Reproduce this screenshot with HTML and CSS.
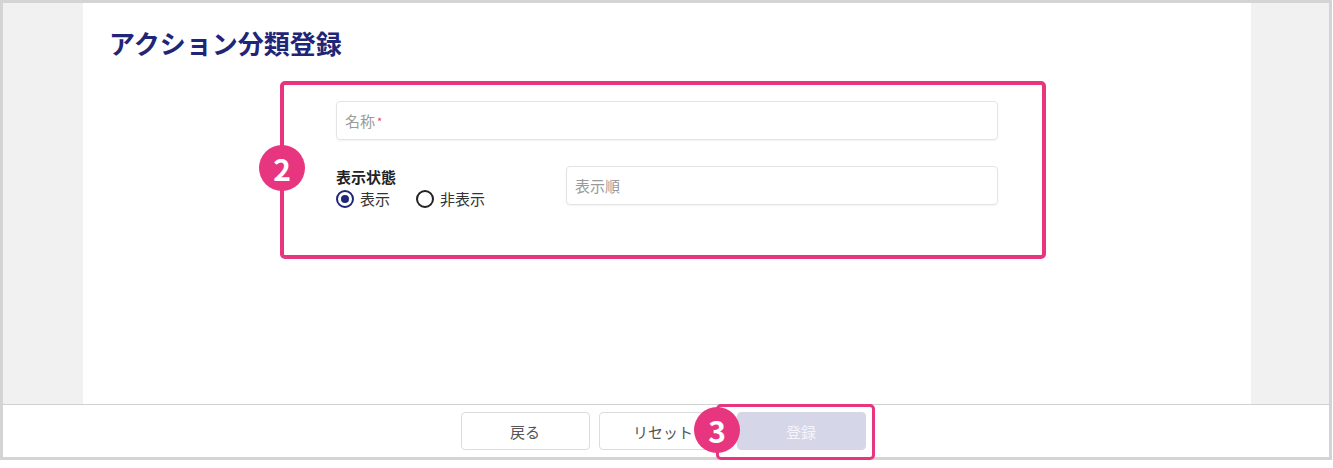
FILE: index.html
```html
<!DOCTYPE html>
<html lang="ja">
<head>
    <meta charset="UTF-8">
    <title>アクション分類登録</title>
    <link rel="stylesheet" href="styles.css">
</head>
<body>

<div class="frame">
    <div class="main">
        <div class="side"></div>
        <div class="content">
            <h1>アクション分類登録</h1>

            <form class="form">
                <div class="field">
                    <div class="placeholder">名称<span class="req">*</span></div>
                </div>

                <div class="row">
                    <div class="status">
                        <div class="label">表示状態</div>
                        <div class="radios">
                            <label class="radio"><span class="dot checked"></span>表示</label>
                            <label class="radio"><span class="dot"></span>非表示</label>
                        </div>
                    </div>
                    <div class="field grow">
                        <div class="placeholder">表示順</div>
                    </div>
                </div>
            </form>
        </div>
        <div class="side right"></div>
    </div>

    <footer class="footer">
        <button type="button" class="btn">戻る</button>
        <button type="button" class="btn">リセット</button>
        <button type="button" class="btn primary" disabled>登録</button>
    </footer>
</div>

<!-- annotations -->
<div class="mark box-2"></div>
<div class="badge badge-2">2</div>
<div class="mark box-3"></div>
<div class="badge badge-3">3</div>

</body>
</html>
```

FILE: styles.css
```css
body {
    margin: 0;
    font-family: "Noto Sans CJK JP", "Noto Sans", sans-serif;
    color: #333;
    background: #fff;
    position: relative;
}

.frame {
    width: 1326px;
    border: 3px solid #d4d4d4;
    background: #fff;
}

.main {
    display: flex;
    height: 401px;
}

.side {
    width: 80px;
    background: #f1f1f1;
}

.side.right {
    width: 78px;
}

.content {
    flex: 1;
    padding: 23px 26px;
}

h1 {
    margin: 0;
    font-size: 26px;
    line-height: 34px;
    font-weight: 700;
    color: #1f2678;
}

.form {
    width: 662px;
    margin: 41px auto 0;
}

.field {
    height: 37px;
    border: 1px solid #e4e4e4;
    border-radius: 4px;
    box-shadow: 0 1px 2px rgba(0, 0, 0, 0.05);
    display: flex;
    align-items: center;
    padding: 0 8px;
}

.placeholder {
    font-size: 15px;
    color: #9a9a9a;
}

.req {
    color: #e0445e;
    font-size: 11px;
    margin-left: 2px;
    vertical-align: 1px;
}

.row {
    display: flex;
    margin-top: 26px;
}

.status {
    width: 230px;
}

.grow {
    flex: 1;
}

.label {
    font-size: 15px;
    font-weight: 700;
    line-height: 20px;
    margin-top: 1px;
    color: #222;
}

.radios {
    display: flex;
    gap: 26px;
    line-height: 23px;
}

.radio {
    display: flex;
    align-items: center;
    font-size: 15px;
    color: #333;
}

.dot {
    box-sizing: border-box;
    width: 18px;
    height: 18px;
    border: 2px solid #222;
    border-radius: 50%;
    margin-right: 6px;
    position: relative;
}

.dot.checked {
    border-color: #1f2678;
}

.dot.checked::after {
    content: "";
    position: absolute;
    left: 3px;
    top: 3px;
    width: 8px;
    height: 8px;
    border-radius: 50%;
    background: #1f2678;
}

.footer {
    border-top: 1px solid #d0d0d0;
    height: 52px;
    display: flex;
    justify-content: center;
    align-items: center;
    gap: 9px;
    padding-right: 6px;
}

.btn {
    width: 129px;
    height: 38px;
    background: #fff;
    border: 1px solid #dcdcdc;
    border-radius: 4px;
    font-family: inherit;
    font-size: 15px;
    color: #555;
}

.btn.primary {
    background: #d5d6e7;
    border-color: #d5d6e7;
    color: #f4f4fa;
}

/* annotations */
.mark {
    position: absolute;
    border: 4px solid #e8357f;
    border-radius: 5px;
}

.box-2 {
    left: 280px;
    top: 81px;
    width: 758px;
    height: 170px;
}

.box-3 {
    left: 716px;
    top: 404px;
    width: 153px;
    height: 50px;
    border-width: 3px;
}

.badge {
    position: absolute;
    width: 46px;
    height: 46px;
    border-radius: 50%;
    background: #e8357f;
    color: #fff;
    font-size: 30px;
    font-weight: 700;
    line-height: 46px;
    text-align: center;
}

.badge-2 {
    left: 259px;
    top: 145px;
}

.badge-3 {
    left: 694px;
    top: 407px;
}
```
